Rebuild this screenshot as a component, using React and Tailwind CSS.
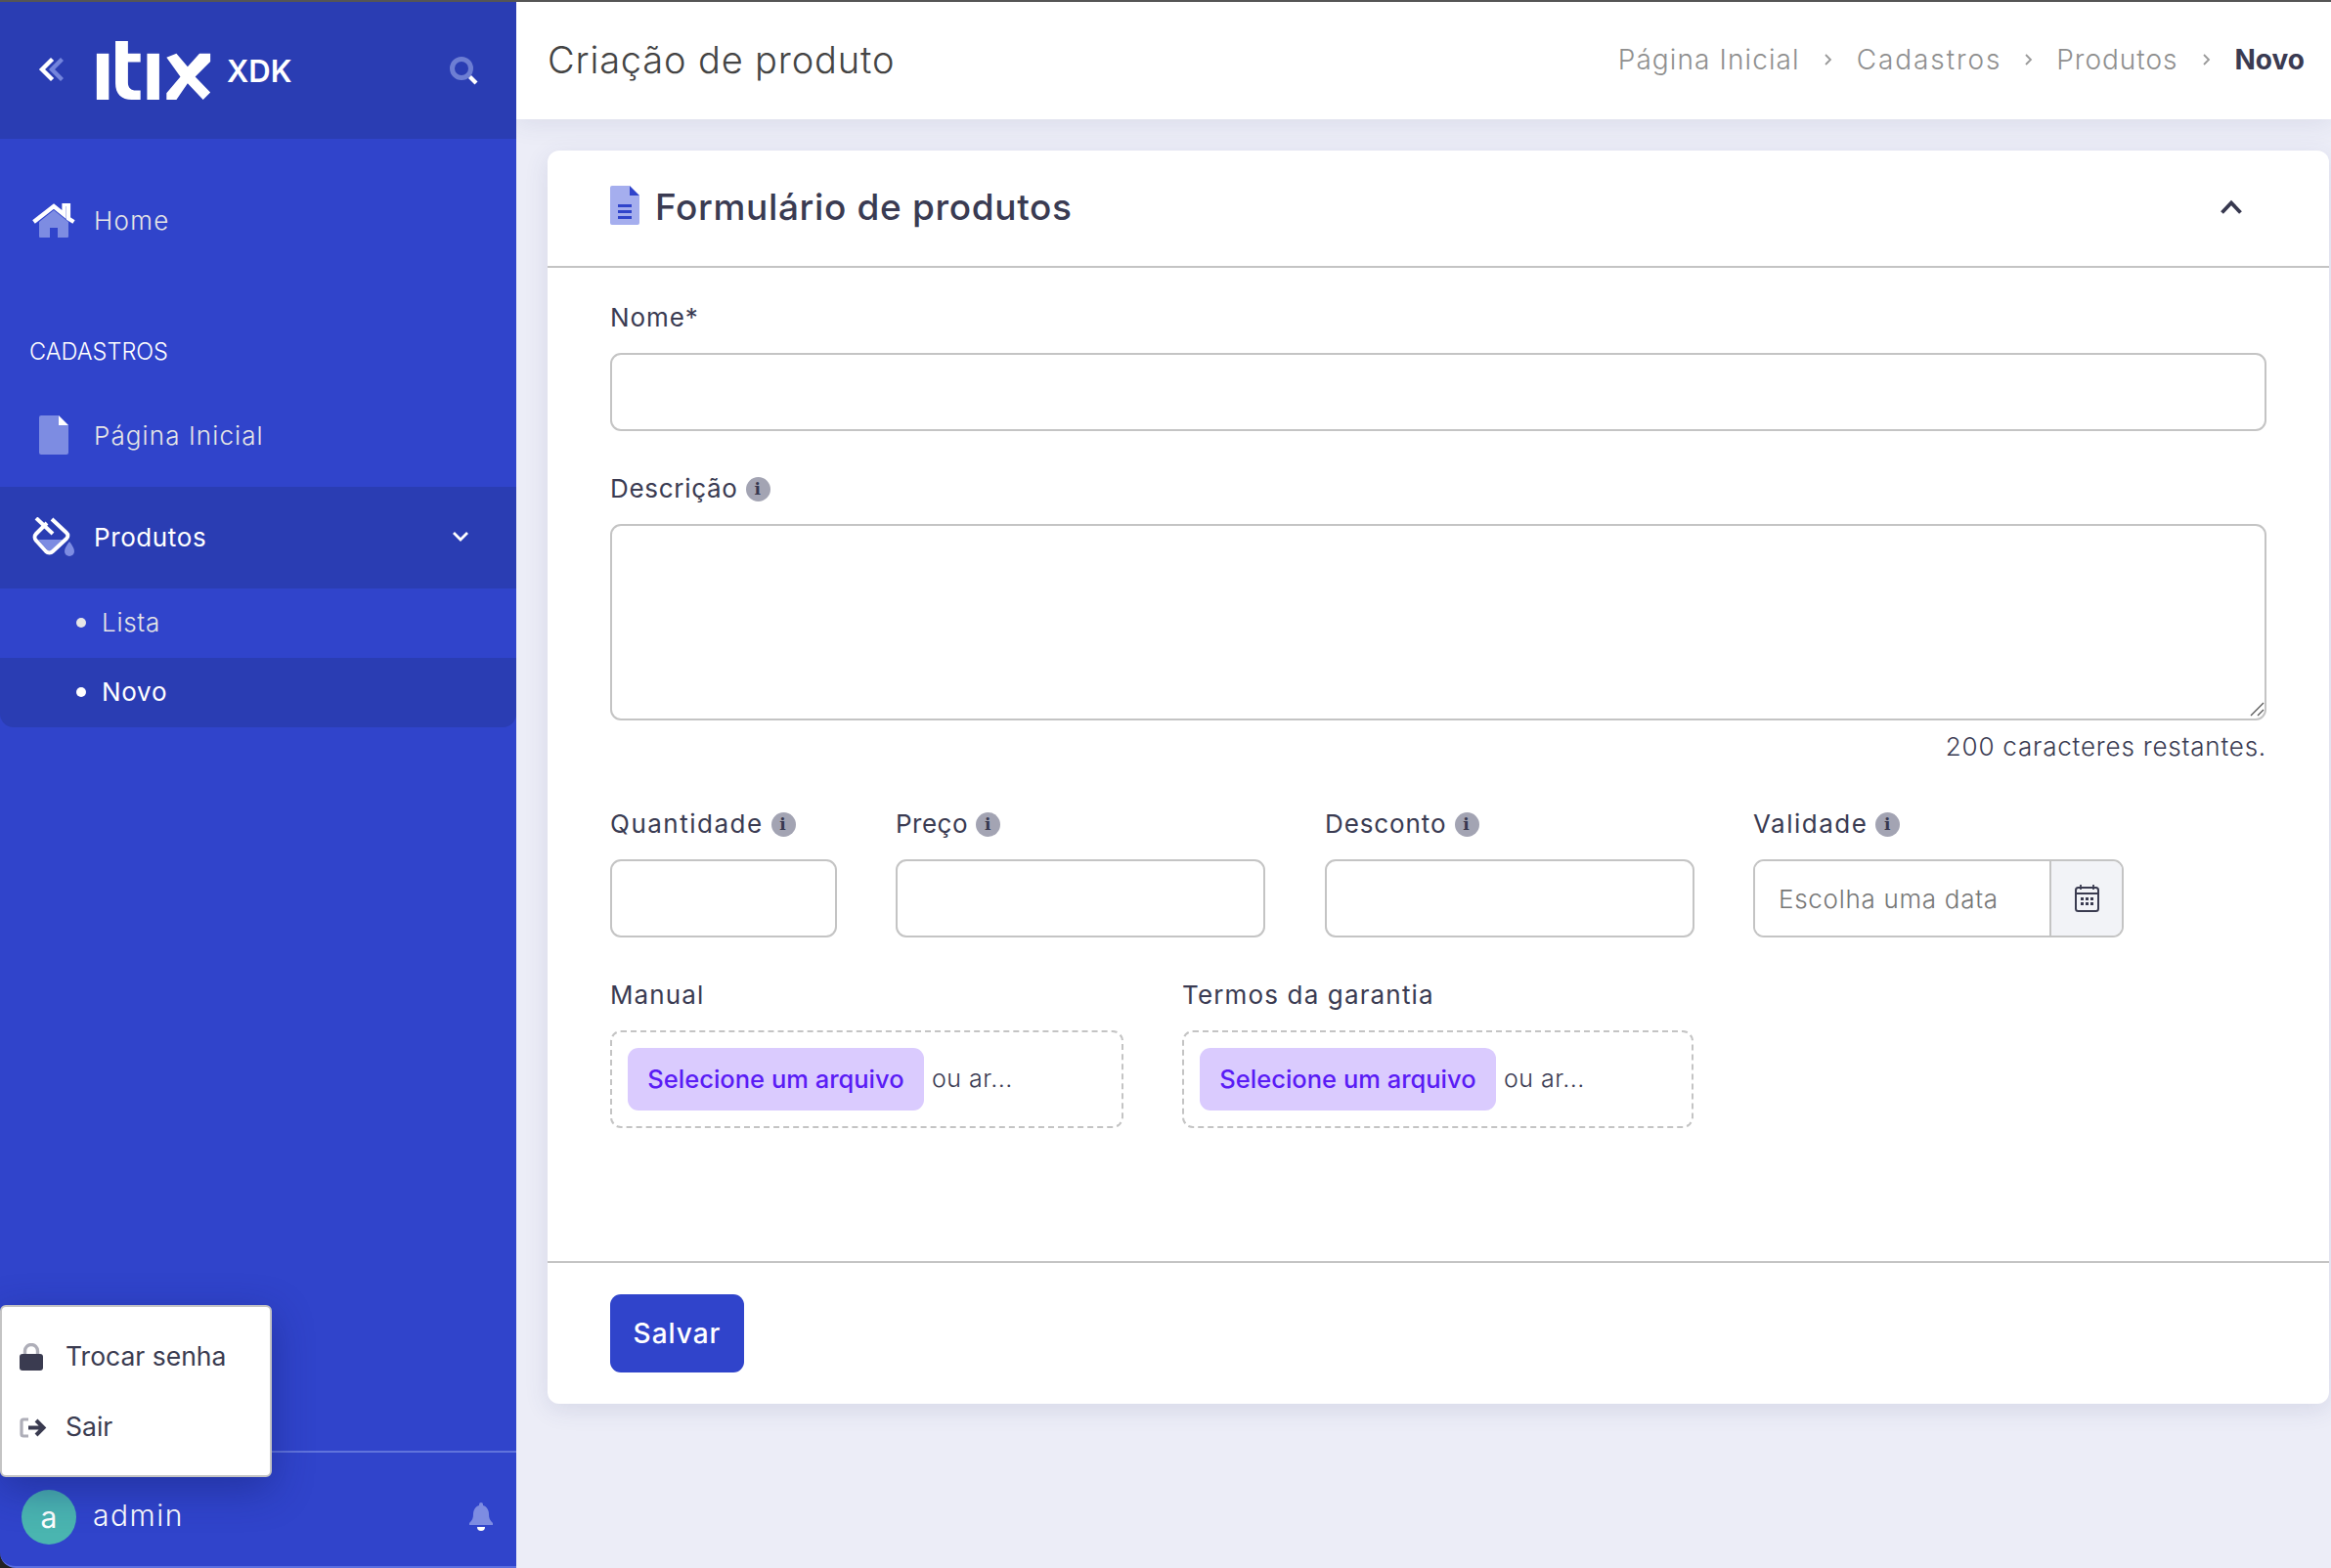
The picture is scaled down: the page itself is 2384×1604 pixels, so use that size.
import React from 'react';

const LogoItix = () => (
  <svg width="120" height="60" viewBox="0 0 345 178" fill="#fff">
    <rect x="0" y="38" width="37" height="140" />
    <path d="M57 0h38v38h38v26H95v62c0 16 10 24 24 24h14v28h-26c-32 0-50-18-50-50z" />
    <rect x="153" y="38" width="37" height="140" />
    <path d="M212 50l30-12 34 40 36-40h33v24l-46 46 46 48-22 22-47-50-34 50h-30v-20l42-50z" />
  </svg>
);

const DoubleLeft = () => (
  <svg width="26" height="26" viewBox="0 0 26 26" fill="none" strokeWidth="4.400" strokeLinecap="square">
    <path d="M23 4l-9 9 9 9" stroke="#7384dc" />
    <path d="M13 4l-9 9 9 9" stroke="#fff" />
  </svg>
);

const SearchIcon = () => (
  <svg width="29" height="29" viewBox="0 0 29 29" fill="none">
    <circle cx="12" cy="12" r="9.500" stroke="#6d7ed3" strokeWidth="5" />
    <path d="M20.500 20.500l6.500 6.500" stroke="#fff" strokeWidth="4.200" />
  </svg>
);

const HomeIcon = () => (
  <svg width="44" height="36" viewBox="0 0 44 36" fill="none">
    <path d="M7 19L22 7l15 12v15a1 1 0 0 1-1 1H26V25h-8v10H8a1 1 0 0 1-1-1z" fill="#7d8ce2" />
    <path d="M1.500 19L22 3l10.500 8.500V1h4.500v14.500L42.500 19" stroke="#fff" strokeWidth="4.200" />
  </svg>
);

const FileIcon = ({ body, fold, lines }) => (
  <svg width="30" height="40" viewBox="0 0 30 40">
    <path d="M2 0h18v10h10v28a2 2 0 0 1-2 2H2a2 2 0 0 1-2-2V2a2 2 0 0 1 2-2z" fill={body} />
    <path d="M20 0l10 10H20z" fill={fold} />
    {lines && <path d="M8 19h14v3H8zM8 25h14v3H8zM8 31h14v3H8z" fill={lines} />}
  </svg>
);

const BucketIcon = () => (
  <svg width="44" height="41" viewBox="0 0 44 41" fill="none">
    <path d="M6 23h25L20 34a3 3 0 0 1-4 0z" fill="#7d8ce2" />
    <path d="M38 25c3 4 5 7 5 10a5 5 0 0 1-10 0c0-3 2-6 5-10z" fill="#7d8ce2" />
    <path d="M15 6L4 17a5 5 0 0 0 0 7l10 11a5 5 0 0 0 7 0l14-13a4 4 0 0 0 0-6L20 2" stroke="#fff" strokeWidth="4" strokeLinejoin="round" />
    <path d="M4 1l17 16" stroke="#fff" strokeWidth="4" />
  </svg>
);

const ChevronDown = () => (
  <svg width="18" height="12" viewBox="0 0 18 12" fill="none">
    <path d="M2 2l7 7 7-7" stroke="#fff" strokeWidth="2.800" />
  </svg>
);

const ChevronUp = () => (
  <svg width="24" height="16" viewBox="0 0 24 16" fill="none">
    <path d="M2.500 13.500L12 3.500l9.500 10" stroke="#37384f" strokeWidth="3.800" />
  </svg>
);

const Crumb = () => (
  <svg width="10" height="14" viewBox="0 0 10 14" fill="none">
    <path d="M2 2l5 5-5 5" stroke="#999" strokeWidth="1.800" />
  </svg>
);

const LockIcon = () => (
  <svg width="24" height="28" viewBox="0 0 24 28" fill="none">
    <path d="M5.500 14V8a6.500 6.500 0 0 1 13 0v6" stroke="#aeaeb8" strokeWidth="3.400" />
    <rect x="0" y="11" width="24" height="17" rx="3" fill="#3a3b50" />
  </svg>
);

const LogoutIcon = () => (
  <svg width="28" height="21" viewBox="0 0 28 21" fill="none">
    <path d="M9 2H4a2 2 0 0 0-2 2v13a2 2 0 0 0 2 2h5" stroke="#aeaeb8" strokeWidth="3.200" />
    <path d="M9 10.500h15M17 3l7.500 7.500L17 18" stroke="#3a3b50" strokeWidth="4" />
  </svg>
);

const BellIcon = () => (
  <svg width="24" height="29" viewBox="0 0 24 29">
    <path d="M12 0a2 2 0 0 1 2 2v1c4 1 6 5 6 9 0 4 1 6 4 9v2H0v-2c3-3 4-5 4-9 0-4 2-8 6-9V2a2 2 0 0 1 2-2z" fill="#7d8ce2" />
    <path d="M8 25h8a4 4 0 0 1-8 0z" fill="#fff" />
  </svg>
);

const InfoIcon = () => (
  <span className="ml-[8px] flex h-[25px] w-[25px] shrink-0 items-center justify-center rounded-full bg-[#a3a4b3] font-['DejaVu_Serif',serif] text-[17px] font-bold leading-none text-[#37384f]">
    i
  </span>
);

const CalendarIcon = () => (
  <svg width="25" height="28" viewBox="0 0 25 28" fill="none">
    <path d="M6 0v5M19 0v5" stroke="#3a3b50" strokeWidth="1.800" />
    <rect x="1" y="3" width="23" height="24" rx="2.500" stroke="#3a3b50" strokeWidth="2" />
    <path d="M1 9h23" stroke="#3a3b50" strokeWidth="2" />
    <path d="M6 13h3v3H6zM11 13h3v3h-3zM16 13h3v3h-3zM6 18h3v3H6zM11 18h3v3h-3zM16 18h3v3h-3z" fill="#3a3b50" />
  </svg>
);

const Label = ({ children, info, tracking = 'tracking-[0.9px]', className = '' }) => (
  <div className={`flex h-[36px] items-center text-[26px] text-[#3a3b52] ${tracking} ${className}`}>
    <span className="-mt-[1px]">{children}</span>
    {info && <InfoIcon />}
  </div>
);

const inputCls = 'block w-full rounded-[11px] border-2 border-[#c4c4c4] bg-white outline-none';

const FileDrop = ({ width }) => (
  <div className={`mt-[18px] flex h-[100px] items-center rounded-[11px] border-2 border-dashed border-[#c4c4c4] pl-[16px] ${width}`}>
    <div className="flex h-[64px] w-[303px] items-center justify-center rounded-[11px] bg-[#dacbfe] text-[25.500px] font-medium text-[#5a1cf5]">
      Selecione um arquivo
    </div>
    <span className="ml-[8px] text-[25px] font-light tracking-[0.5px] text-[#3a3b52]">ou ar...</span>
  </div>
);

export default function App() {
  return (
    <div className="flex h-[1604px] w-[2384px] overflow-hidden border-t-2 border-[#555555] bg-[#222222] font-['Inter',sans-serif]">
      {/* Sidebar */}
      <aside className="relative flex w-[528px] shrink-0 flex-col rounded-bl-[16px] border-b-2 border-[#5a6de0] bg-[#3044cb]">
        <div className="flex h-[140px] shrink-0 items-center bg-[#2a3db3] pl-[39px] pr-[39px]">
          <span className="-mt-[2px] flex">
            <DoubleLeft />
          </span>
          <div className="ml-[32px]">
            <LogoItix />
          </div>
          <span className="ml-[15px] mt-[2px] text-[31px] font-semibold text-white">XDK</span>
          <div className="ml-auto">
            <SearchIcon />
          </div>
        </div>

        <nav className="pt-[33px]">
          <div className="flex h-[104px] items-center gap-[19px] pb-[3px] pl-[33px] text-[26px] font-light tracking-[1.300px] text-[#e6e6e6]">
            <HomeIcon />
            <span>Home</span>
          </div>
          <div className="h-[115px] pl-[30px] pt-[66px] text-[23.500px] font-light leading-[30px] text-white">CADASTROS</div>
          <div className="flex h-[104px] items-center pb-[2px] pl-[40px] text-[26px] font-light tracking-[1.100px] text-[#e6e6e6]">
            <FileIcon body="#7d8ce2" fold="#fff" />
            <span className="ml-[26px]">Página Inicial</span>
          </div>
          <div className="flex h-[104px] items-center gap-[19px] bg-[#2a3db3] pb-[2px] pl-[33px] pr-[48px] text-[26px] tracking-[0.6px] text-white">
            <BucketIcon />
            <span>Produtos</span>
            <span className="ml-auto">
              <ChevronDown />
            </span>
          </div>
          <div className="flex h-[71px] items-center pb-[2px] pl-[78px] text-[26px] font-light tracking-[0.7px] text-[#e6e6e6]">
            <span className="h-[10px] w-[10px] rounded-full bg-[#e6e6e6]" />
            <span className="ml-[16px]">Lista</span>
          </div>
          <div className="flex h-[71px] items-center rounded-b-[14px] bg-[#2a3db3] pb-[2px] pl-[78px] text-[26px] tracking-[0.7px] text-white">
            <span className="h-[10px] w-[10px] rounded-full bg-white" />
            <span className="ml-[16px]">Novo</span>
          </div>
        </nav>

        <div className="mt-auto flex items-center border-t-2 border-[#6073dc] pb-[22px] pl-[22px] pr-[24px] pt-[38px]">
          <div className="flex h-[56px] w-[56px] items-center justify-center rounded-full bg-[#4ab5b0] text-[30px] text-white">a</div>
          <span className="-mt-[4px] ml-[17px] text-[30px] font-light tracking-[1.500px] text-white">admin</span>
          <div className="-mt-[2px] ml-auto">
            <BellIcon />
          </div>
        </div>

        {/* User menu */}
        <div className="absolute bottom-[91px] left-0 h-[176px] w-[278px] rounded-[6px] border-2 border-[#c4c4c4] bg-white pt-[15px] text-[26.500px] text-[#3a3b50] shadow-[0_12px_40px_rgba(20,30,110,0.45)]">
          <div className="flex h-[72px] items-center pl-[18px]">
            <span className="flex w-[47px]">
              <LockIcon />
            </span>
            <span>Trocar senha</span>
          </div>
          <div className="flex h-[72px] items-center pl-[18px]">
            <span className="flex w-[47px]">
              <LogoutIcon />
            </span>
            <span>Sair</span>
          </div>
        </div>
      </aside>

      {/* Main */}
      <main className="min-w-0 flex-1 bg-[#ecedf7]">
        <header className="flex h-[120px] items-center justify-between bg-white pb-[2px] pl-[32px] pr-[27px] shadow-[0_4px_24px_rgba(60,65,120,0.1)]">
          <h1 className="text-[38px] font-light tracking-[0.850px] text-[#444444]">Criação de produto</h1>
          <div className="flex items-center text-[28px] font-light text-[#8f8f8f]">
            <span className="tracking-[1.100px]">Página Inicial</span>
            <span className="mx-[24px] flex">
              <Crumb />
            </span>
            <span className="tracking-[1.900px]">Cadastros</span>
            <span className="mx-[23px] flex">
              <Crumb />
            </span>
            <span className="tracking-[1px]">Produtos</span>
            <span className="mx-[24px] flex">
              <Crumb />
            </span>
            <span className="font-bold text-[#3a3b52]">Novo</span>
          </div>
        </header>

        <div className="pl-[32px] pr-[2px] pt-[32px]">
          <section className="flex h-[1282px] flex-col rounded-[12px] bg-white shadow-[0_6px_24px_rgba(60,65,120,0.12)]">
            <div className="flex h-[120px] shrink-0 items-center border-b-2 border-[#c4c4c4] pb-[2px] pl-[64px] pr-[88px]">
              <span className="-mt-[5px] flex">
                <FileIcon body="#a5aeee" fold="#3044cb" lines="#3044cb" />
              </span>
              <h2 className="ml-[16px] text-[37px] font-medium tracking-[0.650px] text-[#3a3b52]">Formulário de produtos</h2>
              <span className="ml-auto flex">
                <ChevronUp />
              </span>
            </div>

            <div className="flex-1 pl-[64px] pr-[64px] pt-[33px]">
              <Label>Nome*</Label>
              <input className={`mt-[18px] h-[80px] ${inputCls}`} />

              <Label info tracking="tracking-[0.7px]" className="mt-[41px]">Descrição</Label>
              <div className="relative mt-[18px]">
                <textarea className={`h-[201px] resize-none ${inputCls}`} />
                {/* resize grip */}
                <svg className="absolute bottom-[4px] right-[2px]" width="15" height="15" viewBox="0 0 15 15" fill="none">
                  <path d="M1 14L14 1M8 14l6-6" stroke="#555" strokeWidth="1.300" />
                </svg>
              </div>
              <div className="mt-[9px] h-[36px] text-right text-[26px] font-light leading-[36px] tracking-[0.8px] text-[#3a3b52]">
                200 caracteres restantes.
              </div>

              <div className="mt-[43px] flex">
                <div className="w-[232px]">
                  <Label info tracking="tracking-[1.500px]">Quantidade</Label>
                  <input className={`mt-[18px] h-[80px] ${inputCls}`} />
                </div>
                <div className="ml-[60px] w-[378px]">
                  <Label info tracking="tracking-[0.5px]">Preço</Label>
                  <input className={`mt-[18px] h-[80px] ${inputCls}`} />
                </div>
                <div className="ml-[61px] w-[378px]">
                  <Label info>Desconto</Label>
                  <input className={`mt-[18px] h-[80px] ${inputCls}`} />
                </div>
                <div className="ml-[60px] w-[379px]">
                  <Label info tracking="tracking-[1.500px]">Validade</Label>
                  <div className="mt-[18px] flex h-[80px] overflow-hidden rounded-[11px] border-2 border-[#c4c4c4]">
                    <input
                      placeholder="Escolha uma data"
                      className="min-w-0 flex-1 bg-white pl-[24px] text-[26px] font-light tracking-[0.7px] text-[#3a3b52] outline-none placeholder:text-[#777777]"
                    />
                    <div className="flex w-[74px] items-center justify-center border-l-2 border-[#c4c4c4] bg-[#f2f3f7]">
                      <CalendarIcon />
                    </div>
                  </div>
                </div>
              </div>

              <div className="mt-[41px] flex gap-[60px]">
                <div>
                  <Label tracking="tracking-[1.100px]">Manual</Label>
                  <FileDrop width="w-[525px]" />
                </div>
                <div>
                  <Label tracking="tracking-[1.150px]">Termos da garantia</Label>
                  <FileDrop width="w-[523px]" />
                </div>
              </div>
            </div>

            <div className="border-t-2 border-[#c4c4c4] py-[32px] pl-[64px]">
              <button className="flex h-[80px] w-[137px] items-center justify-center rounded-[11px] bg-[#3044cb] text-[28px] font-medium tracking-[1px] text-white">
                Salvar
              </button>
            </div>
          </section>
        </div>
      </main>
    </div>
  );
}
